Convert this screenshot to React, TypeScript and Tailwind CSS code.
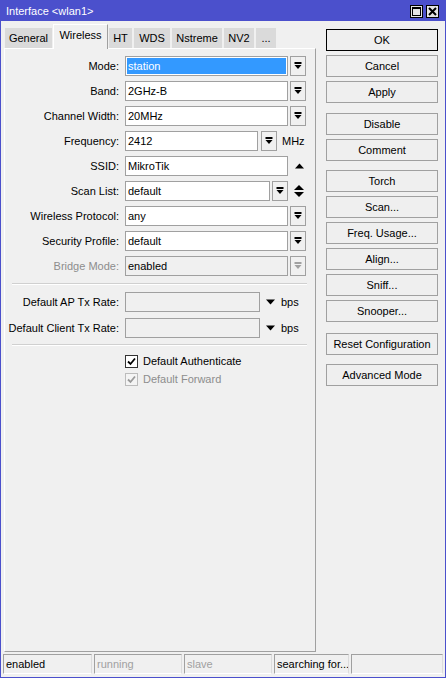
import React from "react";

const font = { fontFamily: '"Liberation Sans", Arial, sans-serif' };

const tabs = [
    { label: "General", cls: "ml-px w-[47px]" },
    { label: "Wireless", cls: "ml-px w-[55px]", active: true },
    { label: "HT", cls: "ml-px w-[23px]" },
    { label: "WDS", cls: "ml-[2px] w-[36px]" },
    { label: "Nstreme", cls: "ml-[2px] w-[50px]" },
    { label: "NV2", cls: "ml-[2px] w-[30px]" },
    { label: "...", cls: "ml-[2px] w-[20px]" },
];

const buttons: { label: string; cls?: string }[] = [
    { label: "OK", cls: "border-black" },
    { label: "Cancel" },
    { label: "Apply" },
    { label: "Disable", cls: "mt-[6px]" },
    { label: "Comment" },
    { label: "Torch", cls: "mt-[5px]" },
    { label: "Scan..." },
    { label: "Freq. Usage..." },
    { label: "Align..." },
    { label: "Sniff..." },
    { label: "Snooper..." },
    { label: "Reset Configuration", cls: "mt-[7px]" },
    { label: "Advanced Mode", cls: "mt-[5px]" },
];

function DropIcon({ gray }: { gray?: boolean }) {
    const c = gray ? "#a0a0a0" : "#000";
    return (
        <svg width="8" height="8" viewBox="0 0 8 8">
            <rect x="0.5" y="0" width="7" height="2" fill={c} />
            <polygon points="0.5,3 7.5,3 4,7" fill={c} />
        </svg>
    );
}

function DropButton({ gray }: { gray?: boolean }) {
    return (
        <div className="w-[16px] h-[20px] border border-[#a0a0a0] bg-[#f0f0f0] flex items-center justify-center">
            <DropIcon gray={gray} />
        </div>
    );
}

function Label({ text, gray }: { text: string; gray?: boolean }) {
    return (
        <div
            className={
                "w-[114px] text-right shrink-0 " +
                (gray ? "text-[#8d8d8d]" : "text-black")
            }
        >
            {text}
        </div>
    );
}

function Field({
    value,
    w,
    disabled,
    selected,
}: {
    value: string;
    w: string;
    disabled?: boolean;
    selected?: boolean;
}) {
    return (
        <div
            className={
                "h-[20px] border border-[#a0a0a0] flex items-center " +
                w +
                (disabled ? " bg-[#f0f0f0]" : " bg-white")
            }
        >
            {selected ? (
                <div className="m-px h-[16px] w-full bg-[#3399ff] text-white pl-px leading-[16px]">
                    {value}
                </div>
            ) : (
                <span className="pl-[2px]">{value}</span>
            )}
        </div>
    );
}

function Row({ children }: { children: React.ReactNode }) {
    return <div className="flex items-center h-[20px]">{children}</div>;
}

function Check({ gray }: { gray?: boolean }) {
    const c = gray ? "#9a9a9a" : "#000";
    return (
        <div
            className={
                "w-[13px] h-[13px] border flex items-center justify-center " +
                (gray ? "border-[#bcbcbc] bg-[#f4f4f4]" : "border-[#333] bg-white")
            }
        >
            <svg width="9" height="9" viewBox="0 0 9 9">
                <polyline
                    points="1,4.5 3.5,7 8,1.5"
                    fill="none"
                    stroke={c}
                    strokeWidth="1.8"
                />
            </svg>
        </div>
    );
}

export default function App() {
    return (
        <div
            className="w-[446px] h-[678px] bg-[#f0f0f0] border border-[#4b50cc] flex flex-col text-[11px] text-black select-none"
            style={font}
        >
            {/* title bar */}
            <div className="h-[20px] bg-[#4b50cc] flex items-center pl-[5px] pr-[6px] shrink-0">
                <span className="text-white text-[11px] flex-1">Interface &lt;wlan1&gt;</span>
                <div className="w-[13px] h-[13px] bg-[#e4e4e4] border border-black flex items-center justify-center">
                    <div className="w-[9px] h-[9px] border border-black border-t-2" />
                </div>
                <div className="ml-[3px] w-[13px] h-[13px] bg-[#e4e4e4] border border-black flex items-center justify-center">
                    <svg width="9" height="9" viewBox="0 0 9 9">
                        <path d="M1,1 L8,8 M8,1 L1,8" stroke="#000" strokeWidth="2" />
                    </svg>
                </div>
            </div>

            {/* main */}
            <div className="flex-1 flex min-h-0">
                <div className="ml-[3px] w-[312px] pt-[3px] flex flex-col">
                    <div className="h-[24px] flex items-end">
                        {tabs.map((t) =>
                            t.active ? (
                                <div
                                    key={t.label}
                                    className={
                                        "relative z-10 -mb-px h-[25px] bg-[#f0f0f0] border-t border-l border-white border-r border-r-[#a0a0a0] flex items-center justify-center pb-[3px] " +
                                        t.cls
                                    }
                                >
                                    {t.label}
                                </div>
                            ) : (
                                <div
                                    key={t.label}
                                    className={
                                        "h-[20px] bg-[#dadada] flex items-center justify-center " +
                                        t.cls
                                    }
                                >
                                    {t.label}
                                </div>
                            )
                        )}
                    </div>
                    <div className="flex-1 border-t border-l border-white border-r border-b border-r-[#a0a0a0] border-b-[#a0a0a0] pt-[7px]">
                        <div className="flex flex-col gap-[5px]">
                            <Row>
                                <Label text="Mode:" />
                                <div className="ml-[6px]">
                                    <Field value="station" w="w-[163px]" selected />
                                </div>
                                <div className="ml-[2px]">
                                    <DropButton />
                                </div>
                            </Row>
                            <Row>
                                <Label text="Band:" />
                                <div className="ml-[6px]">
                                    <Field value="2GHz-B" w="w-[163px]" />
                                </div>
                                <div className="ml-[2px]">
                                    <DropButton />
                                </div>
                            </Row>
                            <Row>
                                <Label text="Channel Width:" />
                                <div className="ml-[6px]">
                                    <Field value="20MHz" w="w-[163px]" />
                                </div>
                                <div className="ml-[2px]">
                                    <DropButton />
                                </div>
                            </Row>
                            <Row>
                                <Label text="Frequency:" />
                                <div className="ml-[6px]">
                                    <Field value="2412" w="w-[133px]" />
                                </div>
                                <div className="ml-[3px]">
                                    <DropButton />
                                </div>
                                <span className="ml-[5px]">MHz</span>
                            </Row>
                            <Row>
                                <Label text="SSID:" />
                                <div className="ml-[6px]">
                                    <Field value="MikroTik" w="w-[163px]" />
                                </div>
                                <svg className="ml-[7px]" width="9" height="6" viewBox="0 0 9 6">
                                    <polygon points="0,5.5 9,5.5 4.5,0.5" fill="#000" />
                                </svg>
                            </Row>
                            <Row>
                                <Label text="Scan List:" />
                                <div className="ml-[6px]">
                                    <Field value="default" w="w-[145px]" />
                                </div>
                                <div className="ml-[2px]">
                                    <DropButton />
                                </div>
                                <svg className="ml-[6px]" width="10" height="14" viewBox="0 0 10 14">
                                    <polygon points="0,6 10,6 5,1" fill="#000" />
                                    <polygon points="0,8 10,8 5,13" fill="#000" />
                                </svg>
                            </Row>
                            <Row>
                                <Label text="Wireless Protocol:" />
                                <div className="ml-[6px]">
                                    <Field value="any" w="w-[163px]" />
                                </div>
                                <div className="ml-[2px]">
                                    <DropButton />
                                </div>
                            </Row>
                            <Row>
                                <Label text="Security Profile:" />
                                <div className="ml-[6px]">
                                    <Field value="default" w="w-[163px]" />
                                </div>
                                <div className="ml-[2px]">
                                    <DropButton />
                                </div>
                            </Row>
                            <Row>
                                <Label text="Bridge Mode:" gray />
                                <div className="ml-[6px]">
                                    <Field value="enabled" w="w-[163px]" disabled />
                                </div>
                                <div className="ml-[2px]">
                                    <DropButton gray />
                                </div>
                            </Row>
                        </div>

                        <div className="mt-[7px] ml-[7px] w-[295px] h-[2px] border-t border-[#d0d0d0] border-b border-b-white" />

                        <div className="mt-[7px] flex flex-col gap-[6px]">
                            <Row>
                                <Label text="Default AP Tx Rate:" />
                                <div className="ml-[6px]">
                                    <Field value="" w="w-[135px]" disabled />
                                </div>
                                <svg className="ml-[6px]" width="9" height="6" viewBox="0 0 9 6">
                                    <polygon points="0,0.5 9,0.5 4.5,5.5" fill="#000" />
                                </svg>
                                <span className="ml-[6px]">bps</span>
                            </Row>
                            <Row>
                                <Label text="Default Client Tx Rate:" />
                                <div className="ml-[6px]">
                                    <Field value="" w="w-[135px]" disabled />
                                </div>
                                <svg className="ml-[6px]" width="9" height="6" viewBox="0 0 9 6">
                                    <polygon points="0,0.5 9,0.5 4.5,5.5" fill="#000" />
                                </svg>
                                <span className="ml-[6px]">bps</span>
                            </Row>
                        </div>

                        <div className="mt-[6px] ml-[7px] w-[295px] h-[2px] border-t border-[#d0d0d0] border-b border-b-white" />

                        <div className="mt-[7px] ml-[120px] flex flex-col gap-[2px]">
                            <div className="flex items-center h-[16px]">
                                <Check />
                                <span className="ml-[5px]">Default Authenticate</span>
                            </div>
                            <div className="flex items-center h-[16px]">
                                <Check gray />
                                <span className="ml-[5px] text-[#8d8d8d]">Default Forward</span>
                            </div>
                        </div>
                    </div>
                </div>

                {/* right buttons */}
                <div className="ml-[10px] w-[112px] pt-[8px] flex flex-col gap-[4px]">
                    {buttons.map((b) => (
                        <div
                            key={b.label}
                            className={
                                "h-[22px] border bg-[#efefef] flex items-center justify-center " +
                                (b.cls && b.cls.includes("border-black")
                                    ? "border-black"
                                    : "border-[#a0a0a0] " + (b.cls || ""))
                            }
                        >
                            <span className="border border-transparent">{b.label}</span>
                        </div>
                    ))}
                </div>
            </div>

            {/* status bar */}
            <div className="h-[20px] mt-[2px] mb-[3px] mx-[2px] flex gap-[2px] shrink-0">
                {[
                    { t: "enabled", w: "w-[89px]" },
                    { t: "running", w: "w-[88px]", gray: true },
                    { t: "slave", w: "w-[88px]", gray: true },
                    { t: "searching for...", w: "w-[75px]" },
                    { t: "", w: "flex-1" },
                ].map((s, i) => (
                    <div
                        key={i}
                        className={
                            "h-full border border-t-[#a0a0a0] border-l-[#a0a0a0] border-r-[#dcdcdc] border-b-[#ffffff] flex items-center pl-[2px] whitespace-nowrap overflow-hidden shrink-0 " +
                            s.w +
                            (s.gray ? " text-[#a0a0a0]" : " text-black")
                        }
                    >
                        {s.t}
                    </div>
                ))}
            </div>
        </div>
    );
}
